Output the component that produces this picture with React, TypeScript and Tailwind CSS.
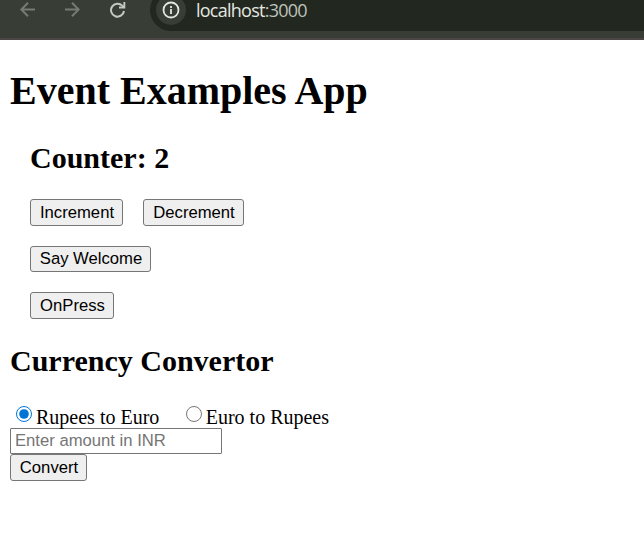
import { useState, type ReactNode } from "react";

function Button({ className, onClick, children }: { className: string; onClick?: () => void; children: ReactNode }) {
  return (
    <button
      type="button"
      onClick={onClick}
      className={`flex items-center justify-center whitespace-nowrap rounded-[3px] border border-[#767676] bg-[#efefef] pl-px font-['Liberation_Sans',Arial,sans-serif] text-[16.67px] leading-[19px] text-black ${className}`}
    >
      {children}
    </button>
  );
}

function Radio({ checked, onSelect, className }: { checked: boolean; onSelect: () => void; className: string }) {
  return (
    <input
      type="radio"
      name="direction"
      checked={checked}
      onChange={onSelect}
      className={`size-4 shrink-0 accent-[#0075d6] ${className}`}
    />
  );
}

function BrowserBar() {
  return (
    <header className="flex h-10 items-start overflow-hidden border-b-2 border-[#4b4645] bg-[#383d35]">
      <nav className="flex h-5 w-[150px] shrink-0 items-center">
        <svg className="ml-5 size-4 text-[#777b74]" viewBox="0 0 16 16" fill="none" stroke="currentColor" strokeWidth="2">
          <path d="M15 7.5H1.5M8 .8l-6.7 6.7L8 14.2" />
        </svg>
        <svg className="ml-7 size-4 text-[#777b74]" viewBox="0 0 16 16" fill="none" stroke="currentColor" strokeWidth="2">
          <path d="M1 7.5h13.5M8 .8l6.7 6.7L8 14.2" />
        </svg>
        <svg className="ml-[30px] size-4 text-[#c5cac1]" viewBox="0 0 16 16" fill="none">
          <path d="M14 9A6.5 6.5 0 1 1 12.2 3.6L14 5.4" stroke="currentColor" strokeWidth="2" />
          <path d="M13.4 0H15.3V6.4H9V4.5H13.4Z" fill="currentColor" />
        </svg>
      </nav>
      <div className="-mt-[11px] flex h-[42px] flex-1 items-center rounded-l-full bg-[#222720] pl-1.5">
        <span className="flex size-[30px] items-center justify-center rounded-full bg-[#383d35]">
          <svg className="size-[18px] text-[#e4e7e0]" viewBox="0 0 18 18" fill="none" stroke="currentColor" strokeWidth="1.8">
            <circle cx="9" cy="9" r="7.5" />
            <path d="M9 8v5M9 5v1.9" />
          </svg>
        </span>
        <span className="ml-[10px] font-['Open_Sans','Noto_Sans',sans-serif] text-[18px] leading-5 tracking-[-0.75px] text-[#e4e7e0]">
          localhost<span className="text-[#bdc2b9]">:3000</span>
        </span>
      </div>
    </header>
  );
}

export default function App() {
  const [count, setCount] = useState(2);
  const [toEuro, setToEuro] = useState(true);
  return (
    <div className="h-[538px] overflow-hidden bg-white font-['Liberation_Serif','Times_New_Roman',serif] text-[20px] leading-[23px] text-black">
      <BrowserBar />
      <main className="px-2.5 pt-7">
        <h1 className="text-[40px] font-bold leading-[46px]">Event Examples App</h1>
        <section className="pl-5 pt-[27px]">
          <h2 className="text-[30px] font-bold leading-[34px]">Counter: {count}</h2>
          <div className="mt-6 flex gap-5">
            <Button className="h-[27px] w-[93px]" onClick={() => setCount(count + 1)}>Increment</Button>
            <Button className="h-[27px] w-[101px]" onClick={() => setCount(count - 1)}>Decrement</Button>
          </div>
          <Button className="mt-5 h-[26px] w-[121px] pb-0.5">Say Welcome</Button>
          <Button className="mt-5 h-[27px] w-[84px]">OnPress</Button>
        </section>
        <section className="pt-[25px]">
          <h2 className="text-[30px] font-bold leading-[34px]">Currency Convertor</h2>
          <div className="mt-[27px] flex h-[23px] items-center pt-0.5">
            <label className="flex items-center">
              <Radio className="-mt-2 ml-1.5" checked={toEuro} onSelect={() => setToEuro(true)} />
              <span className="ml-1">Rupees to Euro</span>
            </label>
            <label className="flex items-center">
              <Radio className="-mt-2 ml-[26.4px]" checked={!toEuro} onSelect={() => setToEuro(false)} />
              <span className="ml-1">Euro to Rupees</span>
            </label>
          </div>
          <input
            placeholder="Enter amount in INR"
            className="block h-[26px] w-[212px] rounded-[1px] border border-[#767676] bg-white px-[4px] font-['Liberation_Sans',Arial,sans-serif] text-[16.67px] leading-[19px] placeholder:text-[#757575]"
          />
          <Button className="h-[27px] w-[77px]">Convert</Button>
        </section>
      </main>
    </div>
  );
}
